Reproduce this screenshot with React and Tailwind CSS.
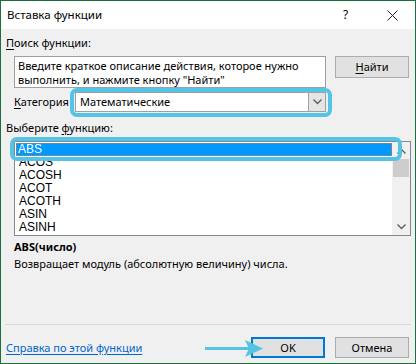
import React from "react";

const font = { fontFamily: '"Noto Sans", "Open Sans", sans-serif' };
const listFont = { fontFamily: '"Liberation Sans", Arial, sans-serif' };

function Chevron({ up = false, className = "" }) {
  return (
    <svg width="9" height="6" viewBox="0 0 9 6" className={className}>
      <path
        d={up ? "M0.5 5.5 L4.5 1.5 L8.5 5.5" : "M0.5 0.5 L4.5 4.5 L8.5 0.5"}
        fill="none"
        stroke="#606060"
        strokeWidth="1.4"
      />
    </svg>
  );
}

export default function App() {
  const items = ["ABS", "ACOS", "ACOSH", "ACOT", "ACOTH", "ASIN", "ASINH"];
  return (
    <div
      className="relative w-[416px] h-[364px] border border-[#1b6e3f] bg-[#f0f0f0] flex flex-col text-[11px] leading-[16px] text-black overflow-hidden"
      style={font}
    >
      {/* title bar */}
      <div className="h-[28px] bg-white flex items-center pl-[6px] shrink-0">
        <span className="flex-1 text-[11.5px]">Вставка функции</span>
        <span className="w-[8px] mr-[36px] text-[12px]">?</span>
        <svg width="11" height="11" viewBox="0 0 11 11" className="mr-[17px]">
          <path d="M0.5 0.5 L10.5 10.5 M10.5 0.5 L0.5 10.5" stroke="#222" strokeWidth="1" />
        </svg>
      </div>

      {/* body */}
      <div className="flex flex-col pl-[13px] pr-[6px]">
        <div className="mt-[6px] -ml-[8px]">
          <span className="underline underline-offset-2">П</span>оиск функции:
        </div>

        <div className="flex mt-[5px]">
          <div className="w-[312px] h-[32px] bg-white border border-[#a0a0a0] pl-[3px] pt-[2px] leading-[14px]">
            Введите краткое описание действия, которое нужно
            <br />
            выполнить, и нажмите кнопку "Найти"
          </div>
          <div className="ml-[9px] w-[74px] h-[22px] bg-[#e1e1e1] border border-[#adadad] flex items-center justify-center">
            <span>
              <span className="underline underline-offset-2">Н</span>айти
            </span>
          </div>
        </div>

        <div className="flex items-center mt-[4px] h-[20px]">
          <span className="w-[61px]">
            <span className="underline underline-offset-2">К</span>атегория
          </span>
          <div className="w-[251px] h-[20px] bg-white border border-[#a0a0a0] flex items-center">
            <span className="flex-1 pl-[4px]">Математические</span>
            <div className="w-[17px] h-[18px] bg-[#e5e5e5] border-l border-[#a0a0a0] flex items-center justify-center">
              <Chevron />
            </div>
          </div>
        </div>

        <div className="mt-[8px] -ml-[8px]">
          Выберите <span className="underline underline-offset-2">ф</span>ункцию:
        </div>

        <div className="mt-[5px] w-[397px] h-[95px] bg-white border border-[#828790] flex">
          <div className="flex-1 pt-[1px] pl-[1px] flex flex-col text-[12px]" style={listFont}>
            {items.map((it, i) => (
              <div
                key={it}
                className={
                  i === 0
                    ? "h-[13px] leading-[13px] pl-[2px] bg-[#0099ff] text-white outline-1 outline-dotted outline-[#d97a3a] -outline-offset-1"
                    : "h-[13px] leading-[13px] pl-[3px]"
                }
              >
                {it}
              </div>
            ))}
          </div>
          <div className="w-[18px] bg-[#f0f0f0] flex flex-col items-center">
            <div className="h-[17px] flex items-center justify-center">
              <Chevron up />
            </div>
            <div className="w-[16px] h-[18px] bg-[#cdcdcd]" />
            <div className="flex-1" />
            <div className="h-[17px] flex items-center justify-center">
              <Chevron />
            </div>
          </div>
        </div>

        <div className="mt-[3px] font-bold">ABS(число)</div>
        <div className="mt-[1px]">Возвращает модуль (абсолютную величину) числа.</div>
      </div>

      <div className="flex-1" />
      <div className="mx-[4px] h-px bg-[#dadada]" />

      <div className="flex items-start h-[38px] pl-[5px] pr-[6px] pt-[12px]">
        <span className="flex-1 text-[#0066cc] underline underline-offset-2 mt-[3px]">
          Справка по этой функции
        </span>
        <div className="w-[74px] h-[21px] bg-[#e1e1e1] border-2 border-[#0078d7] flex items-center justify-center">
          OK
        </div>
        <div className="ml-[10px] w-[74px] h-[21px] bg-[#e1e1e1] border border-[#adadad] flex items-center justify-center">
          Отмена
        </div>
      </div>

      {/* overlays: highlight rings and arrow */}
      <div className="absolute left-[69px] top-[87px] w-[262px] h-[29px] rounded-[7px] border-[4px] border-[#53c3e6] pointer-events-none" />
      <div className="absolute left-[9px] top-[136px] w-[392px] h-[24px] rounded-[7px] border-[4px] border-[#53c3e6] pointer-events-none" />
      <svg
        className="absolute left-[204px] top-[337px] pointer-events-none"
        width="60"
        height="22"
        viewBox="0 0 60 22"
      >
        <rect x="0" y="9" width="44" height="3" fill="#53c3e6" />
        <polygon points="40,2 58,10.5 40,19 44,10.5" fill="#53c3e6" />
      </svg>
    </div>
  );
}
